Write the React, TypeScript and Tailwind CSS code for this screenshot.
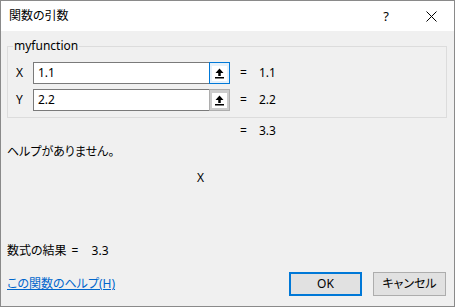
import React from 'react';

const font = { fontFamily: '"Noto Sans", "Noto Sans CJK JP", sans-serif', fontFeatureSettings: '"palt"' };

function RefIcon() {
  return (
    <svg width="9" height="11" viewBox="0 0 9 11" className="block">
      <path d="M4.5 0.5 L8.5 5 L5.75 5 L5.75 8 L3.25 8 L3.25 5 L0.5 5 Z" fill="#000" />
      <rect x="0" y="9" width="9" height="1.5" fill="#000" />
    </svg>
  );
}

function ArgRow({ label, value, focused }: { label: string; value: string; focused?: boolean }) {
  return (
    <div className="flex items-center h-[22px]">
      <div className="w-[25px] pl-[8px]">{label}</div>
      <div className="flex h-[22px] w-[197px] border border-[#7a7a7a] bg-white">
        <div className="flex-1 pl-[4px] leading-[20px]">{value}</div>
        <div
          className={
            focused
              ? 'flex h-[22px] w-[21px] -mt-px -mr-px items-center justify-center border border-[#0078d7] bg-[#e5f1fb]'
              : 'flex h-[22px] w-[21px] -mt-px -mr-px items-center justify-center border border-[#adadad] bg-[#cccccc]'
          }
        >
          <div className="flex h-[15px] w-[15px] items-center justify-center bg-white">
            <RefIcon />
          </div>
        </div>
      </div>
      <div className="ml-[10px] w-[19px]">=</div>
      <div>{value}</div>
    </div>
  );
}

export default function App() {
  return (
    <div
      className="flex h-[307px] w-[455px] flex-col border border-[#8a8a8a] text-[12px] leading-[16px] text-black"
      style={font}
    >
      <div className="flex h-[30px] shrink-0 items-center bg-white pl-[8px]">
        <div className="flex-1 text-[12px]">関数の引数</div>
        <div className="mr-[37px] text-[13px]">?</div>
        <svg width="11" height="11" viewBox="0 0 11 11" className="mr-[17px]">
          <path d="M0.5 0.5 L10.5 10.5 M10.5 0.5 L0.5 10.5" stroke="#000" strokeWidth="1" />
        </svg>
      </div>

      <div className="flex flex-1 flex-col bg-[#f0f0f0] px-[6px]">
        <fieldset className="mt-[7px] mr-[1px] border border-[#dcdcdc] px-0 pb-[6px]">
          <legend className="ml-[5px] px-[1px]">myfunction</legend>
          <div className="mt-[8px] flex flex-col gap-[5px]">
            <ArgRow label="X" value="1.1" focused />
            <ArgRow label="Y" value="2.2" />
          </div>
        </fieldset>

        <div className="mt-[5px] flex pl-[233px]">
          <div className="w-[19px]">=</div>
          <div>3.3</div>
        </div>

        <div className="mt-[5px]">ヘルプがありません。</div>

        <div className="mt-[10px] pl-[190px]">X</div>

        <div className="mt-[57px] flex">
          <div className="whitespace-nowrap">数式の結果</div>
          <div className="ml-[5px] w-[20px]">=</div>
          <div>3.3</div>
        </div>

        <div className="mt-[13px] flex items-center">
          <a className="flex-1 text-[#0066cc] underline">この関数のヘルプ(H)</a>
          <button className="h-[24px] w-[73px] border-2 border-[#0078d7] bg-[#e1e1e1]">OK</button>
          <button className="ml-[11px] mr-[2px] h-[24px] w-[73px] border border-[#adadad] bg-[#e1e1e1]">
            キャンセル
          </button>
        </div>
      </div>
    </div>
  );
}
